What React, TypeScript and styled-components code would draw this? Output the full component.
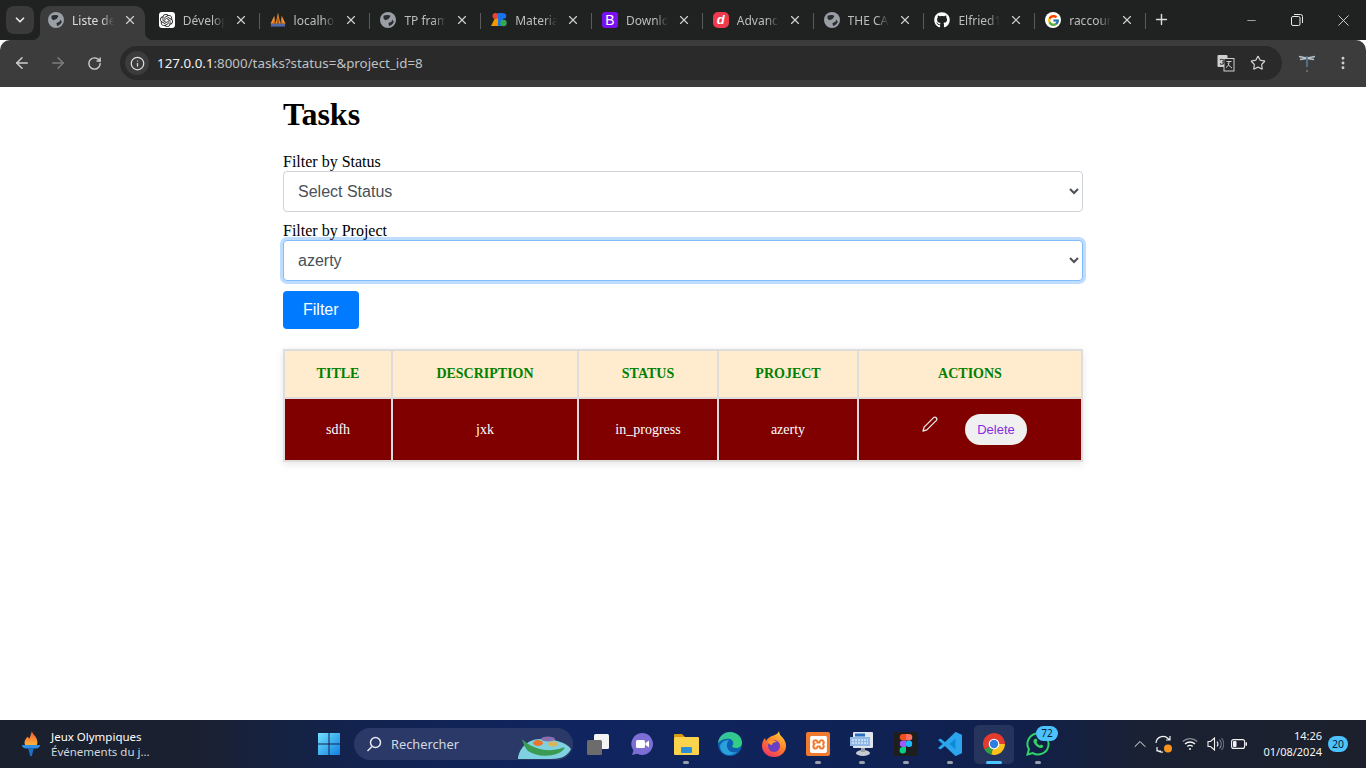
import React from "react";
import styled, { createGlobalStyle } from "styled-components";
import { ArrowLeft, ArrowRight, RotateCw, Info, Star, X, Plus, ChevronDown, ChevronUp, Minus, EllipsisVertical } from "lucide-react";
import { SiOpenai, SiXampp } from "react-icons/si";
import { FaGithub } from "react-icons/fa";
import { FcGoogle } from "react-icons/fc";

const uiFont = `"Noto Sans", "Open Sans", sans-serif`;

const Global = createGlobalStyle`
  html, body { margin: 0; padding: 0; height: 100%; overflow: hidden; background: #fff; }
  #root { height: 100%; }
`;

const Screen = styled.div`
  display: flex;
  flex-direction: column;
  width: 1366px;
  height: 768px;
  overflow: hidden;
`;

/* ---------- browser tab strip ---------- */
const TabStrip = styled.div`
  display: flex;
  align-items: flex-end;
  height: 40px;
  flex: none;
  background: #202121;
  font-family: ${uiFont};
`;
const TabSearch = styled.div`
  display: flex;
  align-items: center;
  justify-content: center;
  width: 28px;
  height: 28px;
  margin: 0 6px 6px 6px;
  border-radius: 8px;
  background: #3a3a3a;
  color: #e6e6e6;
`;
const Tab = styled.div<{ $active?: boolean; $sep?: boolean }>`
  position: relative;
  display: flex;
  align-items: center;
  flex: none;
  box-sizing: border-box;
  width: 110.8px;
  height: 34px;
  padding: 0 14px 0 8px;
  color: ${(p) => (p.$active ? "#dedede" : "#bdbdbd")};
  font-size: 12px;
  &::after {
    content: "";
    display: ${(p) => (p.$sep ? "block" : "none")};
    position: absolute;
    right: 2px;
    top: 7px;
    width: 1px;
    height: 16px;
    background: #5a5a5a;
  }
`;
const ActiveShape = styled.div`
  position: absolute;
  left: 0;
  right: 5.8px;
  top: 0;
  bottom: 0;
  background: #3c3c3c;
  border-radius: 10px 10px 0 0;
  &::before,
  &::after {
    content: "";
    position: absolute;
    bottom: 0;
    width: 8px;
    height: 8px;
  }
  &::before {
    left: -8px;
    background: radial-gradient(circle at 0 0, transparent 8px, #3c3c3c 8.5px);
  }
  &::after {
    right: -8px;
    background: radial-gradient(circle at 100% 0, transparent 8px, #3c3c3c 8.5px);
  }
`;
const Favicon = styled.span`
  position: relative;
  display: flex;
  align-items: center;
  justify-content: center;
  width: 16px;
  height: 16px;
  flex: none;
  margin-top: -6px;
`;
const FavTile = styled.span<{ $bg: string; $radius: string }>`
  display: flex;
  align-items: center;
  justify-content: center;
  width: 16px;
  height: 16px;
  background: ${(p) => p.$bg};
  border-radius: ${(p) => p.$radius};
  color: #fff;
`;
const TileLetter = styled.span<{ $italic?: boolean }>`
  font: ${(p) => (p.$italic ? "italic bold 13px" : "normal 14px")} / 16px "Liberation Sans", sans-serif;
  color: #fff;
`;
const TabTitle = styled.span`
  position: relative;
  flex: 1;
  min-width: 0;
  margin: -6px 9px 0 8px;
  white-space: nowrap;
  overflow: hidden;
  -webkit-mask-image: linear-gradient(90deg, #000 70%, transparent 100%);
  mask-image: linear-gradient(90deg, #000 70%, transparent 100%);
`;
const TabClose = styled.span`
  position: relative;
  display: flex;
  margin-top: -6px;
  color: #cfcfcf;
`;
const NewTab = styled.div`
  display: flex;
  align-items: center;
  margin: 0 0 12px 5px;
  color: #dcdcdc;
`;
const WindowControls = styled.div`
  display: flex;
  margin-left: auto;
  align-self: flex-start;
  color: #e8e8e8;
`;
const WindowButton = styled.div`
  display: flex;
  align-items: center;
  justify-content: center;
  width: 46px;
  height: 40px;
`;

/* ---------- browser toolbar ---------- */
const Toolbar = styled.div`
  display: flex;
  align-items: center;
  flex: none;
  height: 47px;
  padding: 0 0 1px 4px;
  box-sizing: border-box;
  background: #3c3c3c;
  border-radius: 10px 10px 0 0;
  font-family: ${uiFont};
`;
const NavButton = styled.div<{ $dim?: boolean }>`
  display: flex;
  align-items: center;
  justify-content: center;
  flex: none;
  width: 36px;
  height: 34px;
  color: ${(p) => (p.$dim ? "#7d7d7d" : "#cfcfcf")};
`;
const AddressBar = styled.div`
  display: flex;
  align-items: center;
  flex: none;
  box-sizing: border-box;
  width: 1162px;
  height: 34px;
  margin-left: 8px;
  padding: 0 16px 0 5px;
  border-radius: 17px;
  background: #2a2a2a;
`;
const SiteInfo = styled.div`
  display: flex;
  align-items: center;
  justify-content: center;
  width: 24px;
  height: 24px;
  border-radius: 50%;
  background: #3c3c3c;
  color: #e0e0e0;
`;
const Url = styled.div`
  margin-left: 8px;
  font-size: 13.35px;
  color: #bfc1c3;
  white-space: nowrap;
`;
const UrlHost = styled.span`
  color: #f2f2f2;
`;
const BarActions = styled.div`
  display: flex;
  align-items: center;
  gap: 15px;
  margin-left: auto;
  color: #cfcfcf;
`;
const ExtensionButton = styled.div<{ $gap?: boolean }>`
  display: flex;
  align-items: center;
  justify-content: center;
  flex: none;
  width: 36px;
  margin-left: ${(p) => (p.$gap ? "7px" : "0")};
  color: #cfcfcf;
`;

/* ---------- page ---------- */
const Main = styled.main`
  flex: 1;
  min-height: 0;
  background: #fff;
  color: #000;
  font-family: "Liberation Serif", serif;
`;
const Container = styled.div`
  width: 800px;
  margin: 0 auto;
  padding-top: 9px;
`;
const Heading = styled.h1`
  margin: 0 0 20px;
  font-size: 32px;
  font-weight: bold;
  line-height: 37px;
`;
const FormGroup = styled.div`
  margin-bottom: 10px;
`;
const Label = styled.label`
  display: block;
  font-size: 16px;
  line-height: 18px;
`;
const Select = styled.select<{ $focused?: boolean }>`
  display: block;
  box-sizing: border-box;
  width: 100%;
  height: 41px;
  padding: 6px 10px;
  border: 1px solid ${(p) => (p.$focused ? "#80bdff" : "#ced4da")};
  border-radius: 4px;
  background: #fff;
  color: #495057;
  font: 16px "Liberation Sans", sans-serif;
  box-shadow: ${(p) => (p.$focused ? "0 0 0 3px rgba(0,123,255,.25)" : "none")};
  outline: none;
`;
const FilterButton = styled.button`
  display: block;
  box-sizing: border-box;
  height: 38px;
  padding: 0 20px;
  border: 0;
  border-radius: 4px;
  background: #007bff;
  color: #fff;
  font: 16px "Liberation Sans", sans-serif;
`;
const Table = styled.table`
  width: 798px;
  margin-top: 20px;
  table-layout: fixed;
  border-collapse: collapse;
  box-shadow: 0 2px 8px rgba(0, 0, 0, 0.1);
  font-size: 14px;
`;
const Th = styled.th`
  height: 46px;
  padding: 0;
  border: 2px solid #ddd;
  background: #ffebcd;
  color: #008000;
  font-weight: bold;
  text-transform: uppercase;
  text-align: center;
`;
const Td = styled.td`
  height: 61px;
  padding: 0;
  border: 2px solid #ddd;
  background: #800000;
  color: #fff;
  text-align: center;
`;
const Actions = styled.div`
  display: flex;
  align-items: center;
  justify-content: center;
  gap: 27px;
  padding-left: 9px;
`;
const EditLink = styled.a`
  display: flex;
  margin-bottom: 11px;
  color: #e8e8e8;
`;
const DeleteButton = styled.button`
  box-sizing: border-box;
  width: 62px;
  height: 31px;
  padding: 0;
  border: 0;
  border-radius: 16px;
  background: #f0f0f0;
  color: #8a2be2;
  font: 13px "Liberation Sans", sans-serif;
`;

/* ---------- windows taskbar ---------- */
const Taskbar = styled.footer`
  display: flex;
  align-items: center;
  flex: none;
  height: 48px;
  background: linear-gradient(90deg, #1a202d 0%, #1a2030 14%, #12234f 26%, #102560 42%, #0f2358 60%, #10204c 74%, #1a2132 84%, #1b202c 100%);
  color: #fff;
  font-family: ${uiFont};
`;
const Widget = styled.div`
  display: flex;
  align-items: center;
  flex: none;
  box-sizing: border-box;
  width: 309px;
  padding-left: 20px;
  gap: 9px;
`;
const WidgetText = styled.div`
  font-size: 11.5px;
  line-height: 15.5px;
`;
const WidgetSub = styled.div`
  color: #d2d6de;
`;
const TaskIcon = styled.div<{ $active?: boolean }>`
  position: relative;
  display: flex;
  align-items: center;
  justify-content: center;
  flex: none;
  width: 40px;
  height: 39px;
  margin-right: 4px;
  border-radius: 5px;
  background: ${(p) => (p.$active ? "rgba(255,255,255,.09)" : "transparent")};
`;
const StartButton = styled(TaskIcon)`
  margin-right: 5px;
`;
const RunDot = styled.span<{ $active?: boolean }>`
  position: absolute;
  left: 50%;
  bottom: 0;
  width: ${(p) => (p.$active ? "16px" : "6px")};
  height: 3px;
  transform: translateX(-50%);
  border-radius: 2px;
  background: ${(p) => (p.$active ? "#4cc2ff" : "#9a9fa9")};
`;
const CountBadge = styled.span`
  position: absolute;
  right: 0;
  top: 1px;
  min-width: 20px;
  height: 15px;
  padding: 0 1px;
  border-radius: 8px;
  background: #4cc2ff;
  color: #0b1b33;
  font-size: 10px;
  line-height: 15px;
  text-align: center;
`;
const SearchBox = styled.div`
  position: relative;
  display: flex;
  align-items: center;
  flex: none;
  box-sizing: border-box;
  width: 219px;
  height: 32px;
  margin-right: 5px;
  padding-left: 12px;
  border-radius: 16px;
  background: #2a3968;
  color: #d4d8e2;
  font-size: 12.8px;
  gap: 9px;
`;
const SearchArt = styled.span`
  position: absolute;
  right: 0;
  bottom: 1px;
  display: flex;
`;
const Tray = styled.div`
  display: flex;
  align-items: center;
  margin-left: auto;
  padding-right: 18px;
`;
const TrayIcon = styled.span<{ $w: number }>`
  display: flex;
  align-items: center;
  justify-content: center;
  width: ${(p) => p.$w}px;
  color: #f2f2f2;
`;
const Clock = styled.div`
  margin-left: 11px;
  font-size: 11px;
  line-height: 16px;
  text-align: right;
  color: #f4f4f4;
`;
const NotifBadge = styled.span`
  width: 20px;
  height: 16px;
  margin-left: 6px;
  border-radius: 8px;
  background: #4cc2ff;
  color: #0b1b33;
  font-size: 10.5px;
  line-height: 16px;
  text-align: center;
`;

/* ---------- drawn icons ---------- */
const Globe = () => (
  <svg width="16" height="16" viewBox="0 0 16 16">
    <circle cx="8" cy="8" r="8" fill="#9a9ea5" />
    <path d="M3.500 3.800C5.500 2.600 9 2.600 10.500 4L8.500 7 5.200 8.300 3.500 6.500z" fill="#2c2d2f" />
    <path d="M12.200 7.500 13.800 9.800C13.200 12 11 13.600 9 14L8.500 11l3-1.200z" fill="#2c2d2f" />
  </svg>
);
const PmaSails = () => (
  <svg width="17" height="16" viewBox="0 0 17 16">
    <path d="M0.500 12 4.500 3.500 6 12zM6 12 8.500 0 11 12zM11 12 12.500 3.500 16.500 12z" fill="#f0902a" />
    <path d="M8.500 3 7.500 12h2zM4.500 6 4 12h1zM12.500 6 12 12h1z" fill="#8a4510" />
    <rect x="1" y="12" width="15" height="3" fill="#5468a8" />
  </svg>
);
const MaterialMark = () => (
  <svg width="16" height="16" viewBox="0 0 16 16">
    <path d="M0 14 4.500 5H8v9z" fill="#f29900" />
    <circle cx="4.500" cy="4" r="3" fill="#ea4335" />
    <path d="M7 1h5v13H7z" fill="#1a73e8" />
    <circle cx="12.500" cy="4" r="2.800" fill="#1a73e8" />
    <circle cx="12.500" cy="11" r="3.200" fill="#34a853" />
  </svg>
);
const TranslateIcon = () => (
  <svg width="18" height="18" viewBox="0 0 18 18">
    <rect x="0.500" y="1" width="10" height="12" rx="1" fill="#cfcfcf" />
    <rect x="7" y="4.500" width="10" height="12.500" fill="#2a2a2a" stroke="#cfcfcf" />
    <path d="M3 6a2.500 2.500 0 1 1 0 3.500M5 7.800h2.500" stroke="#444" strokeWidth="1.200" fill="none" />
    <path d="M9.500 7.500h5M12 7.500c0 3-1 5-3 6M11 9c.5 2 2 4 4 5" stroke="#cfcfcf" fill="none" />
  </svg>
);
const Dragonfly = () => (
  <svg width="18" height="20" viewBox="0 0 18 20">
    <path d="M1 3.500 8.500 5M17 3.500 9.500 5M2 6.500l6.500-1M16 6.500l-6.500-1" stroke="#b9c6cf" strokeWidth="1.300" fill="none" />
    <path d="M9 3v11" stroke="#5d7f9a" strokeWidth="1.500" />
    <circle cx="9" cy="18" r="1" fill="#777" />
  </svg>
);
const Restore = () => (
  <svg width="12" height="12" viewBox="0 0 12 12" fill="none" stroke="currentColor">
    <rect x="0.500" y="2.500" width="8.500" height="9" rx="1.500" />
    <path d="M3 .500h6.500a2 2 0 0 1 2 2V9" />
  </svg>
);
const Pencil = () => (
  <svg width="16" height="16" viewBox="0 0 16 16" fill="none" stroke="currentColor" strokeWidth="1.300" strokeLinejoin="round">
    <path d="M1 15 2.100 11.100 11.600 1.600A2 2 0 0 1 14.400 4.400L4.900 13.900z" />
  </svg>
);
const Torch = () => (
  <svg width="22" height="26" viewBox="0 0 24 28">
    <defs>
      <linearGradient id="flame" x1="0" y1="0" x2="0" y2="1">
        <stop offset="0" stopColor="#f4562d" />
        <stop offset="1" stopColor="#fdb23c" />
      </linearGradient>
    </defs>
    <path d="M13 0c1 4 6 6 6 12 0 1-.3 2-.7 3H5.700C5 14 5 13 5 12c0-3 2-4 3-6 1 1 2 1.500 2.500 2C11 6 12 3 13 0z" fill="url(#flame)" />
    <path d="M2 15h20c0 2-2 4-5 4H7c-3 0-5-2-5-4z" fill="#2f8de4" />
    <path d="M9 19h6l-2 8h-2z" fill="#1f6fc4" />
  </svg>
);
const WinLogo = () => (
  <svg width="24" height="24" viewBox="0 0 24 24">
    <defs>
      <linearGradient id="win" x1="0" y1="0" x2="1" y2="1">
        <stop offset="0" stopColor="#72e2ff" />
        <stop offset="1" stopColor="#0f7fe0" />
      </linearGradient>
    </defs>
    <path d="M1 1h10.500v10.500H1zM12.500 1H23v10.500H12.500zM1 12.500h10.500V23H1zM12.500 12.500H23V23H12.500z" fill="url(#win)" />
  </svg>
);
const SearchGlass = () => (
  <svg width="16" height="16" viewBox="0 0 16 16" fill="none" stroke="#e8eaf0" strokeWidth="1.500">
    <circle cx="9.500" cy="6.500" r="5" />
    <path d="M6 10.500 1.500 15" />
  </svg>
);
const Boat = () => (
  <svg width="57" height="30" viewBox="0 0 57 30">
    <path d="M2 30C2 22 10 10 24 10c14 0 26 3 31 10-3 6-8 10-20 10z" fill="#7fd1e0" />
    <path d="M6 10c10 10 26 14 40 9 2-1 3 0 2 1-6 8-26 9-36 2C9 19 7 14 6 10z" fill="#3a9a52" />
    <ellipse cx="22" cy="14" rx="5" ry="3" fill="#e8772e" />
    <ellipse cx="32" cy="10" rx="7" ry="2.500" fill="#8a6fb0" />
    <ellipse cx="37" cy="15" rx="5" ry="2.500" fill="#d9b45a" />
  </svg>
);
const TaskView = () => (
  <svg width="24" height="22" viewBox="0 0 24 22">
    <rect x="8" y="1" width="15" height="15" rx="1.500" fill="#f3f3f3" />
    <rect x="1" y="7" width="15" height="15" rx="1.500" fill="#6c6c6c" />
  </svg>
);
const Meet = () => (
  <svg width="24" height="24" viewBox="0 0 24 24">
    <path d="M12 1a11 11 0 1 1-5 20.800L2 23l1.500-4.500A11 11 0 0 1 12 1z" fill="#7b6fd6" />
    <rect x="6" y="8" width="9" height="8" rx="1.500" fill="#fff" />
    <path d="M15.500 11 19 8.500v7L15.500 13z" fill="#fff" />
  </svg>
);
const Folder = () => (
  <svg width="25" height="24" viewBox="0 0 25 24">
    <path d="M0 3a1 1 0 0 1 1-1h7l3 3H0z" fill="#d99a13" />
    <rect x="0" y="5" width="25" height="18" rx="1" fill="#fcd34d" />
    <rect x="7" y="15" width="11" height="6" rx="1" fill="#2a8fd8" />
  </svg>
);
const Edge = () => (
  <svg width="24" height="24" viewBox="0 0 24 24">
    <defs>
      <linearGradient id="edgeA" x1="0" y1="0" x2="1" y2="1">
        <stop offset="0" stopColor="#35c1a0" />
        <stop offset="1" stopColor="#2fd27a" />
      </linearGradient>
    </defs>
    <circle cx="12" cy="12" r="12" fill="#0f5fb0" />
    <path d="M0 11C1 4 6 0 12 0c7 0 12 5 12 11 0 3-3 5-6 5-2 0-4-1-4-2 2-1 2-6-2-7-5-1-9 1-12 4z" fill="url(#edgeA)" />
    <path d="M2 14c0 5 4 9 9 9 3 0 6-1 8-3-4 1-8 0-9-3-2-3-1-7 1-9-4 0-8 2-9 6z" fill="#2aa0dc" />
  </svg>
);
const Firefox = () => (
  <svg width="24" height="26" viewBox="0 0 24 26">
    <defs>
      <linearGradient id="ff" x1="0.800" y1="0" x2="0.200" y2="1">
        <stop offset="0" stopColor="#ffd23c" />
        <stop offset="0.500" stopColor="#ff7a2a" />
        <stop offset="1" stopColor="#f0306a" />
      </linearGradient>
    </defs>
    <path d="M17 0c0 3 2 5 4 7 2 3 3 5 3 8 0 6-5 11-12 11S0 21 0 15c0-3 1-6 3-8l1 3c1-2 3-4 6-5 3-1 6-2 7-5z" fill="url(#ff)" />
    <circle cx="12" cy="15" r="6" fill="#6a3ec2" />
    <path d="M6 10c3-2 7-1 9 1-3 0-5 1-5 3-2 0-4-2-4-4z" fill="#ff9a2a" />
  </svg>
);
const XamppTile = styled.span`
  display: flex;
  align-items: center;
  justify-content: center;
  width: 24px;
  height: 24px;
  border-radius: 2px;
  background: #ef7a30;
  color: #fff;
`;
const Keyboard = () => (
  <svg width="24" height="26" viewBox="0 0 24 26">
    <rect x="3" y="1" width="20" height="16" rx="1" fill="#dfe6ee" />
    <rect x="5" y="2.500" width="10" height="3" fill="#2a6cc0" />
    <rect x="0" y="6" width="20" height="9" fill="#8fb8e6" />
    <path d="M2 9h16M2 12h16" stroke="#ffffff" strokeDasharray="2 1" />
    <ellipse cx="13" cy="22" rx="7" ry="3" fill="#c8ccd2" />
    <rect x="11" y="17" width="4" height="4" fill="#9aa0a8" />
  </svg>
);
const Figma = () => (
  <svg width="24" height="24" viewBox="0 0 24 24">
    <rect width="24" height="24" rx="1" fill="#1e1e1e" />
    <path d="M12 2H9a3 3 0 0 0 0 6.500h3z" fill="#f24e1e" />
    <path d="M12 2h3a3 3 0 0 1 0 6.500h-3z" fill="#ff7262" />
    <path d="M12 8.500H9a3.200 3.200 0 0 0 0 6.500h3z" fill="#a259ff" />
    <circle cx="15" cy="11.800" r="3.200" fill="#1abcfe" />
    <path d="M9 15h3v3a3.200 3.200 0 1 1-3-3z" fill="#0acf83" />
  </svg>
);
const VsCode = () => (
  <svg width="24" height="24" viewBox="0 0 24 24">
    <path d="M17.500 0 24 3v18l-6.500 3L7 14l4-3.500z" fill="#0f8ad6" />
    <path d="M17.500 0 7 10 2.500 6.500 0 8l4.500 4L0 16l2.500 1.500L7 14l10.500 10L24 21V3zM17.500 6.500v11L11.500 12z" fill="#2aa5ee" />
  </svg>
);
const ChromeLogo = () => (
  <svg width="24" height="24" viewBox="0 0 24 24">
    <path d="M12 12 2.470 17.500A11 11 0 1 1 23 12z" fill="#e33b2e" />
    <path d="M12 12H23A11 11 0 0 1 9.150 22.600z" fill="#fbc116" />
    <path d="M12 12 9.150 22.600A11 11 0 0 1 2.470 17.500z" fill="#2f9e44" />
    <circle cx="12" cy="12" r="5.300" fill="#fff" />
    <circle cx="12" cy="12" r="4.200" fill="#2f7de1" />
  </svg>
);
const WhatsApp = () => (
  <svg width="24" height="24" viewBox="0 0 24 24" fill="none">
    <path d="M12 1.500a10.500 10.500 0 1 1-5.200 19.600L1.500 22.500l1.400-5.200A10.500 10.500 0 0 1 12 1.500z" stroke="#2fd366" strokeWidth="2" />
    <path d="M8.500 7c-1.500 1-1.500 3 .5 5.500s4.500 4 6.500 3.500c1.500-.5 2-1.500 1.500-2.500l-2-1-1 1c-1.500-.5-3-2-3.500-3.500l1-1-1-2.200z" fill="#2fd366" />
  </svg>
);
const SyncIcon = () => (
  <svg width="20" height="20" viewBox="0 0 20 20" fill="none" stroke="#f2f2f2" strokeWidth="1.200">
    <path d="M2 9a7 7 0 0 1 12-4.500L16 6M16 2v4h-4" />
    <path d="M3 16l2 1.500A7 7 0 0 0 9 18M3 13v4h4" />
    <circle cx="14" cy="14.500" r="4" fill="#f7941d" stroke="none" />
  </svg>
);
const WifiIcon = () => (
  <svg width="16" height="14" viewBox="0 0 16 14" fill="none" stroke="#f2f2f2" strokeWidth="1.300">
    <path d="M.8 4.500a10.500 10.500 0 0 1 14.400 0" stroke="#8a8f99" />
    <path d="M3 7a7.200 7.200 0 0 1 10 0M5.300 9.500a3.800 3.800 0 0 1 5.400 0" />
    <circle cx="8" cy="12" r="1" fill="#f2f2f2" stroke="none" />
  </svg>
);
const SpeakerIcon = () => (
  <svg width="17" height="14" viewBox="0 0 17 14" fill="none" stroke="#f2f2f2" strokeWidth="1.100">
    <path d="M1 4.500h2.500L7.500 1v12l-4-3.500H1z" />
    <path d="M10 4.500a4 4 0 0 1 0 5" />
    <path d="M12.500 2.500a7 7 0 0 1 0 9" stroke="#8a8f99" />
    <path d="M14.500 1a9 9 0 0 1 0 12" stroke="#6a6f79" />
  </svg>
);
const BatteryIcon = () => (
  <svg width="16" height="10" viewBox="0 0 16 10">
    <rect x="0.600" y="0.600" width="13" height="8.800" rx="2" fill="none" stroke="#f2f2f2" strokeWidth="1.100" />
    <rect x="2" y="2" width="3.500" height="6" rx="1" fill="#f2f2f2" />
    <rect x="14.500" y="3.300" width="1.500" height="3.400" fill="#f2f2f2" />
  </svg>
);

const tabs: { title: string; icon: React.ReactNode; active?: boolean; sep?: boolean }[] = [
  { title: "Liste des tâches", icon: <Globe />, active: true },
  { title: "Développement", icon: <FavTile $bg="#fff" $radius="3px"><SiOpenai size={13} color="#222" /></FavTile>, sep: true },
  { title: "localhost", icon: <PmaSails />, sep: true },
  { title: "TP framework", icon: <Globe />, sep: true },
  { title: "Material", icon: <MaterialMark />, sep: true },
  { title: "Download", icon: <FavTile $bg="#7a10f2" $radius="3px"><TileLetter>B</TileLetter></FavTile>, sep: true },
  { title: "Advanced", icon: <FavTile $bg="#f0394d" $radius="5px"><TileLetter $italic>d</TileLetter></FavTile>, sep: true },
  { title: "THE CAMP", icon: <Globe />, sep: true },
  { title: "Elfried1", icon: <FavTile $bg="transparent" $radius="0"><FaGithub size={16} color="#fff" /></FavTile>, sep: true },
  { title: "raccourci", icon: <FavTile $bg="#fff" $radius="50%"><FcGoogle size={13} /></FavTile>, sep: true },
];

const taskItems: { icon: React.ReactNode; dot?: boolean; active?: boolean; badge?: string }[] = [
  { icon: <TaskView /> },
  { icon: <Meet /> },
  { icon: <Folder />, dot: true },
  { icon: <Edge /> },
  { icon: <Firefox /> },
  { icon: <XamppTile><SiXampp size={17} /></XamppTile>, dot: true },
  { icon: <Keyboard />, dot: true },
  { icon: <Figma />, dot: true },
  { icon: <VsCode />, dot: true },
  { icon: <ChromeLogo />, dot: true, active: true },
  { icon: <WhatsApp />, dot: true, badge: "72" },
];

export default function App() {
  return (
    <Screen>
      <Global />
      <TabStrip>
        <TabSearch>
          <ChevronDown size={14} strokeWidth={3} />
        </TabSearch>
        {tabs.map((t) => (
          <Tab key={t.title} $active={t.active} $sep={t.sep}>
            {t.active && <ActiveShape />}
            <Favicon>{t.icon}</Favicon>
            <TabTitle>{t.title}</TabTitle>
            <TabClose>
              <X size={14} strokeWidth={2} />
            </TabClose>
          </Tab>
        ))}
        <NewTab>
          <Plus size={17} strokeWidth={2} />
        </NewTab>
        <WindowControls>
          <WindowButton>
            <Minus size={13} strokeWidth={1.2} />
          </WindowButton>
          <WindowButton>
            <Restore />
          </WindowButton>
          <WindowButton>
            <X size={19} strokeWidth={1.1} />
          </WindowButton>
        </WindowControls>
      </TabStrip>

      <Toolbar>
        <NavButton>
          <ArrowLeft size={18} />
        </NavButton>
        <NavButton $dim>
          <ArrowRight size={18} />
        </NavButton>
        <NavButton>
          <RotateCw size={15} strokeWidth={2.2} />
        </NavButton>
        <AddressBar>
          <SiteInfo>
            <Info size={15} />
          </SiteInfo>
          <Url>
            <UrlHost>127.0.0.1</UrlHost>:8000/tasks?status=&amp;project_id=8
          </Url>
          <BarActions>
            <TranslateIcon />
            <Star size={16} strokeWidth={1.8} />
          </BarActions>
        </AddressBar>
        <ExtensionButton $gap>
          <Dragonfly />
        </ExtensionButton>
        <ExtensionButton>
          <EllipsisVertical size={16} strokeWidth={2.4} />
        </ExtensionButton>
      </Toolbar>

      <Main>
        <Container>
          <Heading>Tasks</Heading>
          <FormGroup>
            <Label htmlFor="status">Filter by Status</Label>
            <Select id="status" defaultValue="">
              <option value="">Select Status</option>
              <option value="in_progress">in_progress</option>
            </Select>
          </FormGroup>
          <FormGroup>
            <Label htmlFor="project">Filter by Project</Label>
            <Select id="project" defaultValue="8" $focused>
              <option value="">Select Project</option>
              <option value="8">azerty</option>
            </Select>
          </FormGroup>
          <FilterButton type="button">Filter</FilterButton>
          <Table>
            <colgroup>
              <col width="108" />
              <col width="186" />
              <col width="140" />
              <col width="140" />
              <col width="224" />
            </colgroup>
            <thead>
              <tr>
                <Th>Title</Th>
                <Th>Description</Th>
                <Th>Status</Th>
                <Th>Project</Th>
                <Th>Actions</Th>
              </tr>
            </thead>
            <tbody>
              <tr>
                <Td>sdfh</Td>
                <Td>jxk</Td>
                <Td>in_progress</Td>
                <Td>azerty</Td>
                <Td>
                  <Actions>
                    <EditLink>
                      <Pencil />
                    </EditLink>
                    <DeleteButton type="button">Delete</DeleteButton>
                  </Actions>
                </Td>
              </tr>
            </tbody>
          </Table>
        </Container>
      </Main>

      <Taskbar>
        <Widget>
          <Torch />
          <WidgetText>
            <div>Jeux Olympiques</div>
            <WidgetSub>Événements du j...</WidgetSub>
          </WidgetText>
        </Widget>
        <StartButton>
          <WinLogo />
        </StartButton>
        <SearchBox>
          <SearchGlass />
          Rechercher
          <SearchArt>
            <Boat />
          </SearchArt>
        </SearchBox>
        {taskItems.map((item, i) => (
          <TaskIcon key={i} $active={item.active}>
            {item.icon}
            {item.badge && <CountBadge>{item.badge}</CountBadge>}
            {item.dot && <RunDot $active={item.active} />}
          </TaskIcon>
        ))}
        <Tray>
          <TrayIcon $w={24}>
            <ChevronUp size={20} strokeWidth={1.2} />
          </TrayIcon>
          <TrayIcon $w={24}>
            <SyncIcon />
          </TrayIcon>
          <TrayIcon $w={28}>
            <WifiIcon />
          </TrayIcon>
          <TrayIcon $w={22}>
            <SpeakerIcon />
          </TrayIcon>
          <TrayIcon $w={26}>
            <BatteryIcon />
          </TrayIcon>
          <Clock>
            14:26
            <br />
            01/08/2024
          </Clock>
          <NotifBadge>20</NotifBadge>
        </Tray>
      </Taskbar>
    </Screen>
  );
}
